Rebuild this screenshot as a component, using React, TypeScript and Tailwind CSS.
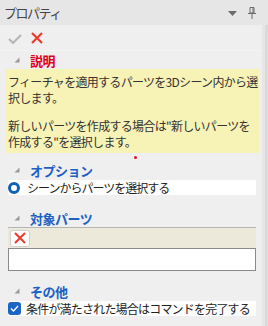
import React from "react";

const Tri = () => (
  <svg width="6" height="6" viewBox="0 0 6 6" className="shrink-0">
    <polygon points="5.5,0.5 5.5,5.5 0.5,5.5" fill="#9a9a9a" />
  </svg>
);

const SectionHeader = ({ label, color }: { label: string; color: string }) => (
  <div className="flex items-center h-[18px] pl-[14px]">
    <Tri />
    <span className={`ml-[10px] text-[13px] font-bold leading-none tracking-[-0.5px] ${color}`}>{label}</span>
  </div>
);

const RedX = ({ size = 12, w = 2.2 }: { size?: number; w?: number }) => (
  <svg width={size} height={size} viewBox="0 0 12 12">
    <path d="M1 1 L11 11 M11 1 L1 11" stroke="#ee3a2a" strokeWidth={w} strokeLinecap="butt" />
  </svg>
);

export default function App() {
  return (
    <div
      className="w-[268px] h-[326px] bg-[#e6e6e6] flex flex-col overflow-hidden text-[#222]"
      style={{ fontFamily: '"Noto Sans CJK JP", "Noto Sans", sans-serif' }}
    >
      {/* Title bar */}
      <div className="h-[25px] flex items-center pl-[4px] pr-[12px] shrink-0">
        <span className="text-[13px] text-[#444] tracking-[-1.5px] leading-none">プロパティ</span>
        <div className="flex-1" />
        <svg width="9" height="5" viewBox="0 0 9 5" className="mr-[11px] mt-[2px]">
          <polygon points="0,0 9,0 4.5,5" fill="#6b6b6b" />
        </svg>
        <svg width="8" height="12" viewBox="0 0 8 12">
          <path d="M2 0.5 H6 V6 H2 Z" fill="none" stroke="#6b6b6b" strokeWidth="1" />
          <path d="M0 6.5 H8" stroke="#6b6b6b" strokeWidth="1" />
          <path d="M4 6.5 V12" stroke="#6b6b6b" strokeWidth="1" />
          <path d="M5 1 V6" stroke="#6b6b6b" strokeWidth="1" />
        </svg>
      </div>
      <div className="flex flex-1">
        <div className="w-[262px] bg-[#efefef] flex flex-col">
          {/* toolbar */}
          <div className="h-[26px] flex items-center pl-[8px] border-b border-[#f3f3f3]">
            <svg width="14" height="10" viewBox="0 0 14 10" className="mt-[3px]">
              <path d="M1 5 L5 9 L13 1" fill="none" stroke="#b4b4b4" strokeWidth="2" />
            </svg>
            <div className="ml-[9px]">
              <RedX size={12} w={2.2} />
            </div>
          </div>

          <SectionHeader label="説明" color="text-[#e5001a]" />
          <div className="ml-[5px] mr-[3px] bg-[#f7f2b5] pl-[3px] pt-[5px] pb-[3px] text-[12px] leading-[16px] tracking-[-0.7px] text-[#333]">
            <p>フィーチャを適用するパーツを3Dシーン内から選択します。</p>
            <p className="mt-[12px]">新しいパーツを作成する場合は"新しいパーツを作成する"を選択します。</p>
          </div>
          <div className="h-[8px] flex items-center pl-[134px]">
            <div className="w-[3px] h-[3px] rounded-full bg-[#e81123]" />
          </div>

          <SectionHeader label="オプション" color="text-[#1b61c6]" />
          <div className="ml-[8px] mr-[6px] h-[15px] mt-[1px] bg-white flex items-center">
            <div className="w-[12px] h-[12px] rounded-full border-[3.5px] border-[#0f5fb6] bg-white shrink-0" />
            <span className="ml-[7px] text-[12px] leading-none tracking-[-1px] text-[#222]">シーンからパーツを選択する</span>
          </div>

          <div className="h-[14px]" />
          <SectionHeader label="対象パーツ" color="text-[#1b61c6]" />
          <div className="ml-[8px] mr-[6px] h-[21px] bg-[#ece9da] border-t border-[#b5b5b5] flex items-center pl-[2px]">
            <div className="w-[20px] h-[17px] bg-white rounded-[3px] border border-[#d0d0d0] flex items-center justify-center">
              <RedX size={12} w={2} />
            </div>
          </div>
          <div className="ml-[8px] mr-[6px] h-[23px] bg-white border border-[#8a8a8a]" />

          <div className="h-[11px]" />
          <SectionHeader label="その他" color="text-[#1b61c6]" />
          <div className="ml-[8px] mr-[6px] h-[15px] mt-[1px] bg-white flex items-center">
            <div className="w-[13px] h-[13px] rounded-[3px] bg-[#1b66c5] flex items-center justify-center shrink-0">
              <svg width="9" height="7" viewBox="0 0 9 7">
                <path d="M1 3.5 L3.5 6 L8 1" fill="none" stroke="white" strokeWidth="1.3" />
              </svg>
            </div>
            <span className="ml-[5px] text-[12px] leading-none tracking-[-0.8px] text-[#222]">条件が満たされた場合はコマンドを完了する</span>
          </div>
        </div>
        <div className="w-[3px] bg-[#e6e6e6]" />
        <div className="w-[3px] bg-[#dadada]" />
      </div>
    </div>
  );
}
